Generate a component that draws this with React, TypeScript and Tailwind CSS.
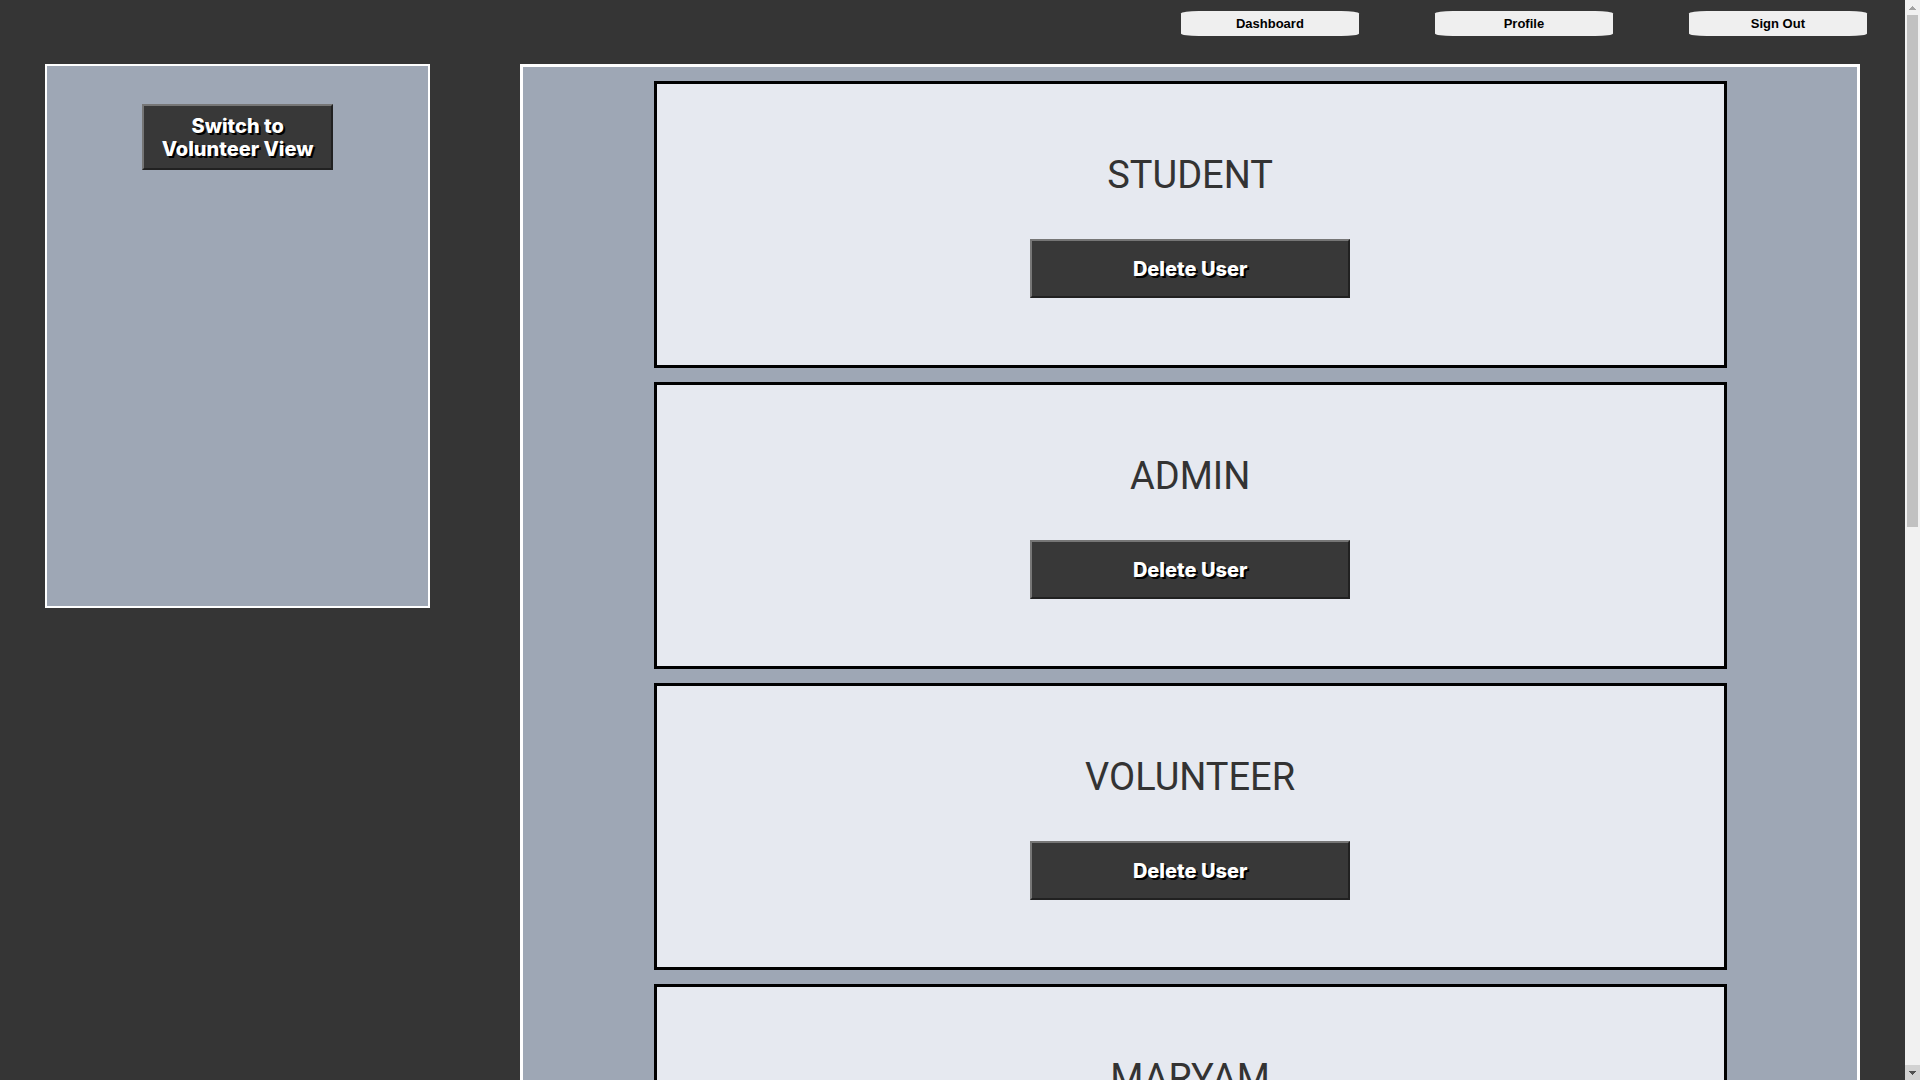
const navItems = ["Dashboard", "Profile", "Sign Out"];
const users = ["STUDENT", "ADMIN", "VOLUNTEER", "MARYAM"];

const actionButton =
  "border-2 border-t-[#767676] border-l-[#767676] border-r-[#212121] border-b-[#212121] bg-[#383838] pt-[2px] font-['Inter',sans-serif] text-[20px] leading-[23px] font-extrabold text-white [text-shadow:2px_2px_black] hover:bg-[#444444]";

function UserCard({ name }: { name: string }) {
  return (
    <article className="mb-[14px] box-content flex w-[80%] flex-col items-center border-3 border-black bg-[#e6e9f0] pt-[69px] pb-[67px]">
      <h2 className="mb-[41px] font-['Roboto',sans-serif] text-[38px] leading-[45px] font-normal text-[#333333]">
        {name}
      </h2>
      <button type="button" className={`${actionButton} h-[59px] w-[30%]`}>
        Delete User
      </button>
    </article>
  );
}

function Scrollbar() {
  return (
    <div aria-hidden="true" className="flex w-[15px] shrink-0 flex-col items-center bg-[#f1f1f1]">
      <div className="flex h-[15px] w-full items-center justify-center">
        <svg width="7" height="4" viewBox="0 0 7 4" shapeRendering="crispEdges">
          <path d="M3 0h1v1h1v1h1v1h1v1H0V3h1V2h1V1h1z" fill="#a3a3a3" />
        </svg>
      </div>
      <div className="flex w-[11px] grow flex-col">
        <div className="h-[48.8%] bg-[#c1c1c1]" />
      </div>
      <div className="flex h-[15px] w-full items-center justify-center bg-[#d2d2d2]">
        <svg width="7" height="4" viewBox="0 0 7 4" shapeRendering="crispEdges">
          <path d="M0 0h7v1H6v1H5v1H4v1H3V3H2V2H1V1H0z" fill="#505050" />
        </svg>
      </div>
    </div>
  );
}

export default function App() {
  return (
    <div className="flex h-screen bg-[#353535]">
      <div className="grow overflow-y-auto [scrollbar-width:none]">
        <nav className="flex h-16 items-start justify-end gap-[76px] pt-[11px] pr-[2%]">
          {navItems.map((item) => (
            <button
              key={item}
              type="button"
              className="h-[25px] w-[178px] rounded-[10%] bg-[#efefef] font-['Liberation_Sans',Arial,sans-serif] text-[13px] font-bold text-black hover:bg-white"
            >
              {item}
            </button>
          ))}
        </nav>
        <div className="flex items-start justify-around">
          <aside className="box-content flex h-[540px] w-[20%] justify-center border-2 border-white bg-[#9ea7b5]">
            <button type="button" className={`${actionButton} mt-[38px] h-[66px] w-[50%] self-start`}>
              Switch to
              <br />
              Volunteer View
            </button>
          </aside>
          <main className="box-content flex w-[70%] flex-col items-center border-3 border-white bg-[#9ea7b5] pt-[14px]">
            {users.map((user) => (
              <UserCard key={user} name={user} />
            ))}
          </main>
        </div>
      </div>
      <Scrollbar />
    </div>
  );
}
